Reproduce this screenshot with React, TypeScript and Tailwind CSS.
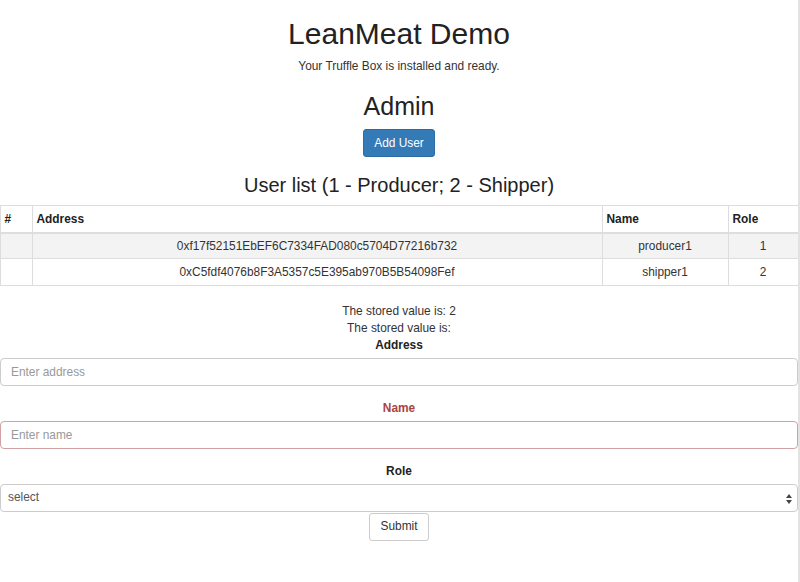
import React from "react";

const rows = [
  { id: "", address: "0xf17f52151EbEF6C7334FAD080c5704D77216b732", name: "producer1", role: "1" },
  { id: "", address: "0xC5fdf4076b8F3A5357c5E395ab970B5B54098Fef", name: "shipper1", role: "2" },
];

export default function App() {
  return (
    <div
      className="flex w-[800px] h-[582px] bg-white text-[#333] text-[11.9px] leading-[16.67px] overflow-hidden"
      style={{ fontFamily: '"Liberation Sans", Arial, Helvetica, sans-serif' }}
    >
      <div className="w-[798px] flex flex-col items-center">
        <h1 className="mt-[17px] mb-[8px] text-[30px] leading-[33px] text-[#222]">LeanMeat Demo</h1>
        <p className="m-0">Your Truffle Box is installed and ready.</p>
        <h2 className="mt-[18px] mb-[9px] text-[25px] leading-[27.5px] text-[#222]">Admin</h2>
        <button className="h-[28px] px-[10px] bg-[#337ab7] border border-[#2e6da4] rounded-[3px] text-white text-[11.9px]">
          Add User
        </button>
        <h3 className="mt-[17px] mb-[9px] text-[20px] leading-[22px] text-[#222]">
          User list (1 - Producer; 2 - Shipper)
        </h3>
        <table className="w-[798px] table-fixed border-collapse border border-[#ddd] mb-[17px]">
          <colgroup>
            <col className="w-[32px]" />
            <col className="w-[570px]" />
            <col className="w-[126px]" />
            <col className="w-[70px]" />
          </colgroup>
          <thead>
            <tr className="h-[27px]">
              <th className="border border-[#ddd] border-b-2 text-left font-bold px-[4px] text-[#222]">#</th>
              <th className="border border-[#ddd] border-b-2 text-left font-bold px-[4px] text-[#222]">Address</th>
              <th className="border border-[#ddd] border-b-2 text-left font-bold px-[4px] text-[#222]">Name</th>
              <th className="border border-[#ddd] border-b-2 text-left font-bold px-[4px] text-[#222]">Role</th>
            </tr>
          </thead>
          <tbody>
            {rows.map((r, i) => (
              <tr key={i} className={i === 0 ? "h-[26px] bg-[#f3f3f3]" : "h-[27px]"}>
                <td className="border border-[#ddd] px-[4px] text-center">{r.id}</td>
                <td className="border border-[#ddd] px-[4px] text-center">{r.address}</td>
                <td className="border border-[#ddd] px-[4px] text-center">{r.name}</td>
                <td className="border border-[#ddd] px-[4px] text-center">{r.role}</td>
              </tr>
            ))}
          </tbody>
        </table>
        <p className="m-0">The stored value is: 2</p>
        <p className="m-0">The stored value is: </p>
        <div className="w-full flex flex-col items-center">
          <label className="font-bold text-[#222]">Address</label>
          <input
            className="mt-[5px] w-full h-[28px] border border-[#ccc] rounded-[4px] px-[10px] text-[11.9px] placeholder:text-[#999] outline-none"
            placeholder="Enter address"
          />
        </div>
        <div className="w-full flex flex-col items-center mt-[14px]">
          <label className="font-bold text-[#a94442]">Name</label>
          <input
            className="mt-[4px] w-full h-[28px] border border-[#cfa3a3] rounded-[4px] px-[10px] text-[11.9px] placeholder:text-[#999] outline-none"
            placeholder="Enter name"
          />
        </div>
        <div className="w-full flex flex-col items-center mt-[14px]">
          <label className="font-bold text-[#222]">Role</label>
          <div className="relative mt-[4px] w-full h-[28px] border border-[#ccc] rounded-[4px] flex items-center px-[7px] text-[#555]">
            <span>select</span>
            <svg className="absolute right-[5px] top-[9px]" width="6" height="10" viewBox="0 0 6 10">
              <path d="M3 0 L6 4 L0 4 Z" fill="#444" />
              <path d="M0 6 L6 6 L3 10 Z" fill="#444" />
            </svg>
          </div>
        </div>
        <button className="mt-[1px] h-[28px] px-[10px] bg-white border border-[#ccc] rounded-[3px] text-[#333] text-[11.9px]">
          Submit
        </button>
      </div>
      <div className="w-[2px] h-full bg-[#e2e2e2]" />
    </div>
  );
}
